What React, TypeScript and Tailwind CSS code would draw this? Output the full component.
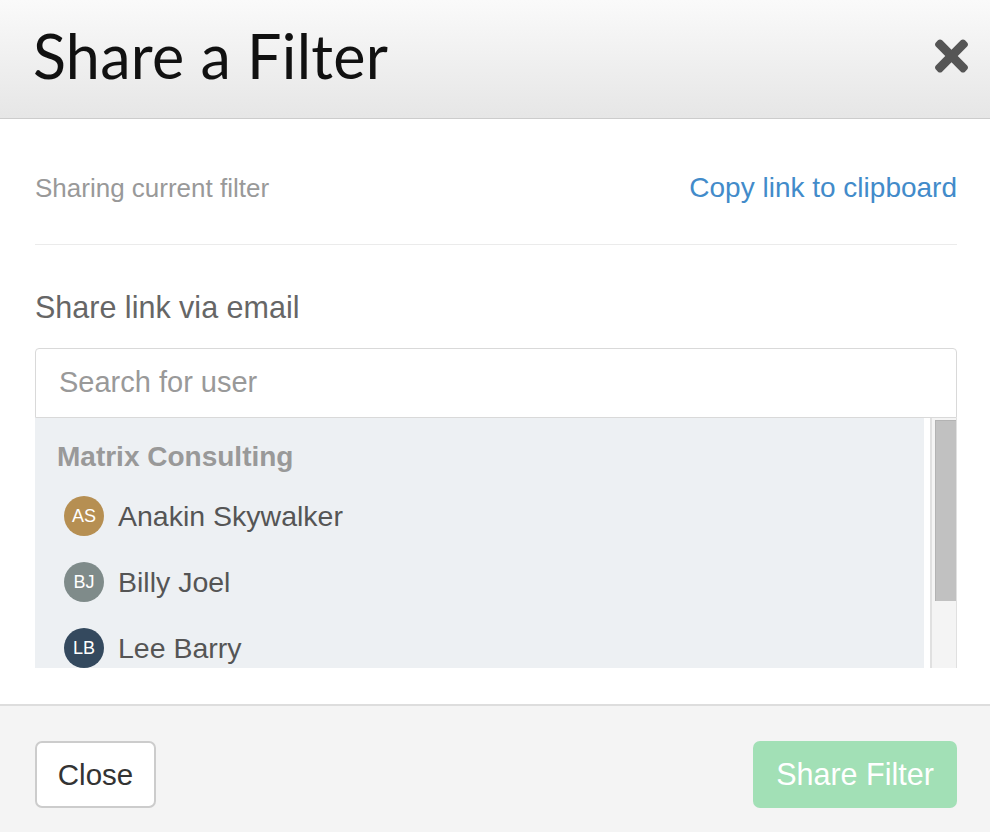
import { FaTimes } from "react-icons/fa"

const users = [
  { initials: "AS", name: "Anakin Skywalker", color: "bg-[#b68f52]" },
  { initials: "BJ", name: "Billy Joel", color: "bg-[#7f8b8a]" },
  { initials: "LB", name: "Lee Barry", color: "bg-[#34495e]" },
]

export default function App() {
  return (
    <div className="w-[990px] h-[832px] flex flex-col bg-white font-['Liberation_Sans',Arial,sans-serif] overflow-hidden">
      {/* Header */}
      <header className="h-[119px] shrink-0 flex items-center justify-between pl-[33px] pr-[22px] bg-gradient-to-b from-[#fafafa] to-[#e6e6e6] border-b border-[#cccccc]">
        <h1 className="font-['Lato',sans-serif] text-[61px] leading-none text-[#111] pb-[8px] tracking-[0.3px]">
          Share a Filter
        </h1>
        <button className="text-[#555] pb-[6px]">
          <FaTimes className="w-[33px] h-[48px]" />
        </button>
      </header>

      {/* Body */}
      <main className="flex-1 flex flex-col pl-[35px] pr-[33px]">
        <div className="flex items-center justify-between pt-[52px] pb-[39px] border-b border-[#ebebeb] leading-[34px]">
          <span className="text-[26px] text-[#999]">Sharing current filter</span>
          <a className="text-[28px] text-[#428bca] cursor-pointer">Copy link to clipboard</a>
        </div>

        <label className="mt-[44px] mb-[23px] text-[30.5px] leading-[36px] text-[#666]">Share link via email</label>

        <div className="h-[70px] border border-[#d9d9d9] rounded-t-[4px] flex items-center pl-[23px]">
          <span className="text-[29px] text-[#999]">Search for user</span>
        </div>

        {/* Dropdown list with scrollbar */}
        <div className="h-[250px] flex">
          <div className="flex-1 mr-[6px] bg-[#edf0f3] overflow-hidden">
            <div className="h-[65px] pl-[22px] pt-[22px] text-[28px] leading-[34px] font-bold text-[#999]">
              Matrix Consulting
            </div>
            {users.map((u) => (
              <div key={u.name} className="h-[66px] flex items-center pl-[29px] gap-[14px]">
                <div className={`w-[40px] h-[40px] rounded-full ${u.color} text-white text-[18px] flex items-center justify-center`}>
                  {u.initials}
                </div>
                <span className="text-[28.5px] text-[#555]">{u.name}</span>
              </div>
            ))}
          </div>
          <div className="w-[27px] flex border-l-2 border-r border-[#e0e0e0] bg-[#f4f4f4] pl-[3px] pt-[2px]">
            <div className="w-full h-[181px] bg-[#c1c1c1] border-l border-t border-[#b3b3b3]" />
          </div>
        </div>
      </main>

      {/* Footer */}
      <footer className="h-[128px] shrink-0 flex items-start justify-between pl-[35px] pr-[33px] pt-[35px] bg-[#f4f4f4] border-t-2 border-[#dddddd]">
        <button className="w-[121px] h-[67px] bg-white border-2 border-[#cccccc] rounded-[7px] text-[29.5px] leading-none text-[#333]">
          Close
        </button>
        <button className="w-[204px] h-[67px] bg-[#a2e0b6] rounded-[7px] text-[30.5px] leading-none text-white">
          Share Filter
        </button>
      </footer>
    </div>
  )
}
